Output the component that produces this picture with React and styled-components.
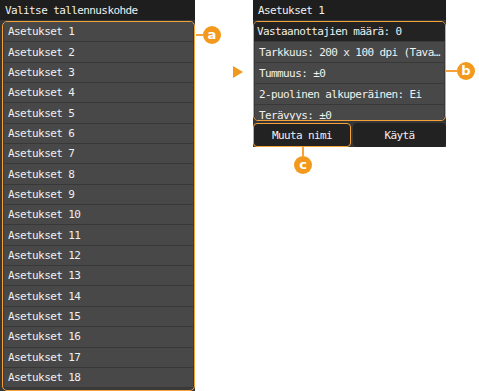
import React from 'react'
import styled, { createGlobalStyle } from 'styled-components'

const ORANGE = '#f5a23a'
const BADGE = '#f39a1e'

const Global = createGlobalStyle`
  html, body {
    margin: 0;
    padding: 0;
    background: #fff;
  }
`

const Page = styled.div`
  position: relative;
  display: flex;
  align-items: flex-start;
  width: 479px;
  height: 391px;
  overflow: hidden;
  font-family: 'DejaVu Sans Mono', 'Liberation Mono', monospace;
  font-size: 11px;
  letter-spacing: -0.6px;
  color: #f0f0f0;
`

const Screen = styled.div`
  display: flex;
  flex-direction: column;
  width: ${(p) => p.$w}px;
  height: ${(p) => p.$h}px;
  background: #363636;
`

const Title = styled.div`
  height: 20px;
  flex: none;
  display: flex;
  align-items: center;
  padding-left: 5px;
  background: #1e1e1e;
`

const Frame = styled.div`
  display: flex;
  flex-direction: column;
  margin: 1px 0 0 ${(p) => p.$ml || 0}px;
  height: ${(p) => p.$h}px;
  border: 1.5px solid ${ORANGE};
  border-radius: 5px;
  overflow: hidden;
  background: #3a3a3a;
`

const Row = styled.div`
  flex: none;
  height: ${(p) => p.$h || 19.4}px;
  display: flex;
  align-items: center;
  padding-left: ${(p) => p.$pl || 4}px;
  margin: 0 1px;
  background: #484848;
  border-bottom: 1px solid #383838;
  white-space: nowrap;
  overflow: hidden;
`

const Summary = styled.div`
  flex: none;
  height: 19px;
  display: flex;
  align-items: center;
  padding-left: 3px;
  background: #232323;
  border-bottom: 1px solid #3a3a3a;
`

const Middle = styled.div`
  width: 58px;
  flex: none;
  padding: 66px 0 0 38px;
  box-sizing: border-box;
`

const Arrow = styled.div`
  width: 0;
  height: 0;
  border-top: 6px solid transparent;
  border-bottom: 6px solid transparent;
  border-left: 10px solid ${BADGE};
`

const Buttons = styled.div`
  display: grid;
  grid-template-columns: 98px 1fr;
  gap: 2px;
  margin-top: 2px;
  height: 24px;
`

const Button = styled.div`
  display: flex;
  align-items: center;
  justify-content: center;
  background: #222;
  border-radius: 4px;
  box-sizing: border-box;
  border: 1.5px solid ${(p) => (p.$active ? ORANGE : '#222')};
`

const Callout = styled.div`
  position: absolute;
  left: ${(p) => p.$x}px;
  top: ${(p) => p.$y}px;
  display: flex;
  flex-direction: ${(p) => (p.$down ? 'column' : 'row')};
  align-items: center;
`

const Line = styled.div`
  background: ${ORANGE};
  width: ${(p) => (p.$down ? 1.5 : p.$len)}px;
  height: ${(p) => (p.$down ? p.$len : 1.5)}px;
`

const Badge = styled.div`
  width: 18px;
  height: 18px;
  border-radius: 50%;
  background: ${BADGE};
  color: #fff;
  display: flex;
  align-items: center;
  justify-content: center;
  font-family: 'DejaVu Sans', 'Liberation Sans', sans-serif;
  font-weight: bold;
  font-size: 13px;
  letter-spacing: 0;
  line-height: 1;
  padding-bottom: 2px;
  box-sizing: border-box;
`

const settings = Array.from({ length: 18 }, (_, i) => `Asetukset ${i + 1}`)

const details = [
  'Tarkkuus: 200 x 100 dpi (Tava…',
  'Tummuus: ±0',
  '2-puolinen alkuperäinen: Ei',
  'Terävyys: ±0',
]

const App = () => {
  return (
    <Page>
      <Global />
      <Screen $w={195} $h={391}>
        <Title>Valitse tallennuskohde</Title>
        <Frame $ml={2} $h={368}>
          {settings.map((s) => (
            <Row key={s} $h={19.35}>
              {s}
            </Row>
          ))}
        </Frame>
      </Screen>

      <Middle>
        <Arrow />
      </Middle>

      <Screen $w={193} $h={147}>
        <Title>Asetukset 1</Title>
        <Frame $h={99}>
          <Summary>Vastaanottajien määrä: 0</Summary>
          {details.map((d) => (
            <Row key={d} $h={20} $pl={4}>
              {d}
            </Row>
          ))}
        </Frame>
        <Buttons>
          <Button $active>Muuta nimi</Button>
          <Button>Käytä</Button>
        </Buttons>
      </Screen>

      <Callout $x={196} $y={26}>
        <Line $len={7} />
        <Badge>a</Badge>
      </Callout>
      <Callout $x={446} $y={62}>
        <Line $len={11} />
        <Badge>b</Badge>
      </Callout>
      <Callout $x={294} $y={146} $down>
        <Line $down $len={10} />
        <Badge>c</Badge>
      </Callout>
    </Page>
  )
}

export default App
